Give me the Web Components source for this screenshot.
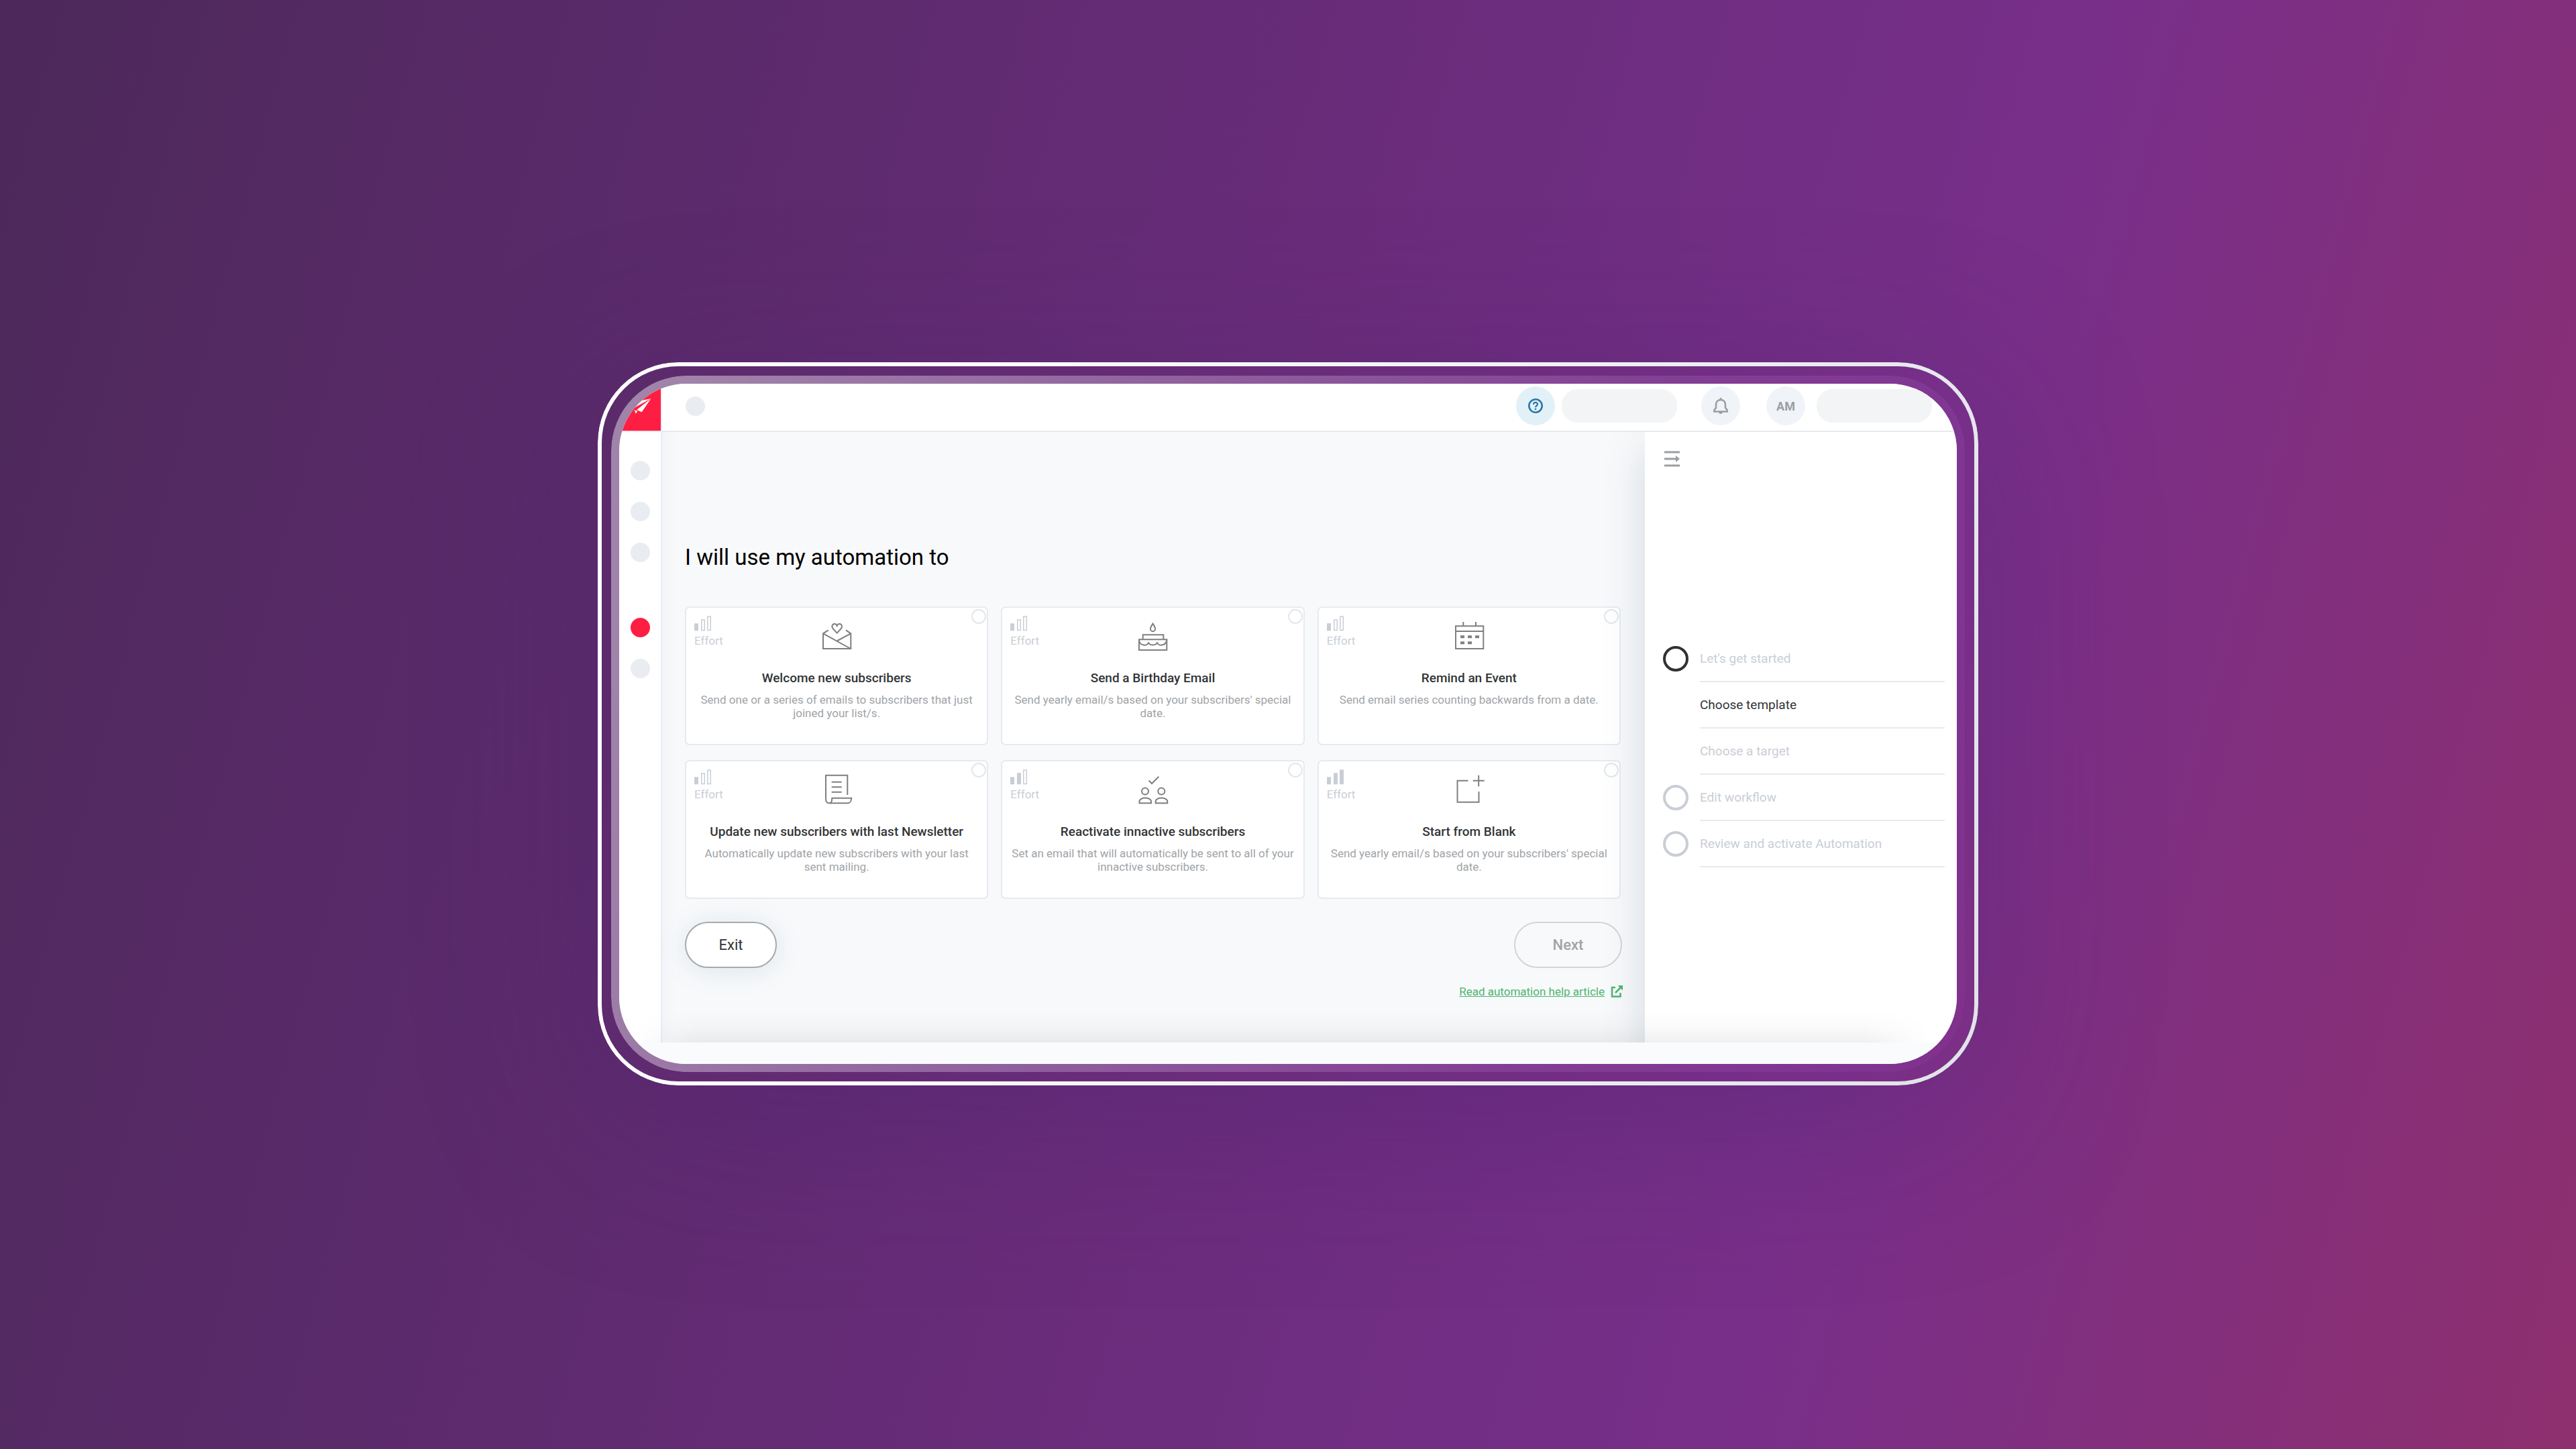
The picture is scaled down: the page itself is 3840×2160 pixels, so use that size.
<!DOCTYPE html>
<html lang="en">
<head>
<meta charset="utf-8">
<title>Automation setup</title>
<style>
    html {
        --line: #e6eaef;
        --muted: #c9ced6;
        --text: #313435;
        --text-secondary: #a0a4a8;
        --brand: #ff1e43;
        --blob: #e9ecf1;
    }
    body {
        margin: 0;
        font-family: Roboto, "Liberation Sans", sans-serif;
        color: var(--text);
        background: linear-gradient(105deg, #4c295a 0%, #622b73 36%, #782f8a 71%, #8e2f6e 100%);
    }
</style>
</head>
<body>
<device-stage>
    <app-shell>
        <app-rail slot="rail"></app-rail>
        <app-header slot="header"></app-header>
        <template-picker heading="I will use my automation to">
            <template-card icon="welcome" effort="1" heading="Welcome new subscribers">Send one or a series of emails to subscribers that just joined your list/s.</template-card>
            <template-card icon="birthday" effort="1" heading="Send a Birthday Email">Send yearly email/s based on your subscribers' special date.</template-card>
            <template-card icon="event" effort="1" heading="Remind an Event">Send email series counting backwards from a date.</template-card>
            <template-card icon="newsletter" effort="1" heading="Update new subscribers with last Newsletter">Automatically update new subscribers with your last sent mailing.</template-card>
            <template-card icon="people" effort="2" heading="Reactivate innactive subscribers">Set an email that will automatically be sent to all of your innactive subscribers.</template-card>
            <template-card icon="blank" effort="3" heading="Start from Blank">Send yearly email/s based on your subscribers' special date.</template-card>
        </template-picker>
        <step-panel slot="aside">
            <step-item marker="current">Let's get started</step-item>
            <step-item active>Choose template</step-item>
            <step-item>Choose a target</step-item>
            <step-item marker="todo">Edit workflow</step-item>
            <step-item marker="todo">Review and activate Automation</step-item>
        </step-panel>
    </app-shell>
</device-stage>

<script>
const ICONS = {
    welcome: `
        <path d="M11.7 15.3 4 20.3V43h41.3V20.3L38 15.3M4 20.3 45 43M45.3 20.3 24.5 31.5"/>
        <path d="M24.7 19.6 18.6 13C16 10 17.8 6 21 6c2 0 3 1.2 3.7 2.8C25.4 7.2 26.4 6 28.4 6c3.2 0 5 4 2.4 7z"/>`,
    birthday: `
        <path d="M24.5 5.6c2.2 3.4 3.6 5.6 3.6 8a3.6 3.6 0 0 1-7.2 0c0-2.400 1.4-4.6 3.6-8z"/>
        <path d="M9.7 29.3v-7h30.6v7M4 29.3h41.3V45H4z"/>
        <path d="M4 30c1 9.5 13 9.5 14 3.5 1.5 5.2 11.5 5.2 13 0 1 6 13 6 14.3-3.5"/>`,
    event: `
        <path d="M4 9.3h41.3V43H4zM4 17h41.3M15.3 3v7M34 3v7"/>
        <path d="M11 25.3h6M22 25.3h6M33 25.3h6M11 34.3h6M22 34.3h6" stroke-width="4"/>`,
    newsletter: `
        <path d="M40.3 32V2.7H8v34.6c0 5 2 7 5 7h27.5c4 0 5.3-2.3 5.8-7.6H17.3c0 5-1 7.6-4.3 7.6"/>
        <path d="M16.7 12.7h15M16.7 20.2h15M16.7 27.7h15"/>`,
    people: `
        <path d="M18.7 10.5 23 15 33.3 4.7"/>
        <circle cx="13" cy="26.5" r="5"/><circle cx="37.3" cy="26.5" r="5"/>
        <path d="M4.5 44.3v-2.5c0-7 17.5-7 17.5 0v2.5zM28.7 44.3v-2.5c0-7 17.5-7 17.5 0v2.5z"/>`,
    blank: `
        <path d="M22.5 10.7H6.5v32h32V27M29.7 10.7h17M38.2 2.7v16.5"/>`
};

/* Purple page with the double outline of the phone around its slot */
class DeviceStage extends HTMLElement {
    constructor() {
        super();
        this.attachShadow({ mode: 'open' });
    }

    connectedCallback() {
        this.shadowRoot.innerHTML = `
            <style>
                :host {
                    display: flex;
                    box-sizing: border-box;
                    align-items: center;
                    justify-content: center;
                    min-height: 100vh;
                    padding: 24px 24px 26px;
                }
                .outline, .bezel {
                    position: relative;
                    box-sizing: border-box;
                }
                .outline {
                    width: min(100%, 2058px);
                    padding: 20px;
                    border-radius: 120px;
                    box-shadow: 0 50px 280px rgba(72, 34, 110, 0.34);
                }
                .bezel {
                    padding: 12px;
                    border-radius: 112px;
                }
                /* gradient rings: everything inside the border is masked out */
                .outline::before, .bezel::before {
                    content: "";
                    position: absolute;
                    inset: 0;
                    border: 6px solid transparent;
                    border-radius: inherit;
                    background: linear-gradient(105deg, #fff 20%, #e0e3e8) border-box;
                    mask: linear-gradient(#000, #000) padding-box exclude, linear-gradient(#000, #000) border-box;
                }
                .bezel::before {
                    border-width: 12px;
                    background: linear-gradient(105deg, rgba(255, 255, 255, 0.42) 5%, rgba(224, 150, 240, 0.16) 70%, rgba(150, 60, 170, 0.16)) border-box;
                }
            </style>
            <div class="outline"><div class="bezel"><slot></slot></div></div>
        `;
    }
}

class AppShell extends HTMLElement {
    constructor() {
        super();
        this.attachShadow({ mode: 'open' });
    }

    connectedCallback() {
        this.shadowRoot.innerHTML = `
            <style>
                :host {
                    position: relative;
                    display: grid;
                    grid-template-columns: 64px 1fr 465px;
                    grid-template-rows: 72px auto 32px;
                    overflow: hidden;
                    border-radius: 100px;
                    background: #fff;
                }
                .rail { grid-area: 1 / 1 / 3 / 2; z-index: 1; }
                .header { grid-area: 1 / 2 / 2 / 4; z-index: 2; }
                .main { grid-area: 2 / 2; }
                .aside { grid-area: 2 / 3; }
                .rail, .header, .main, .aside { display: grid; }
                .dock {
                    grid-area: 3 / 1 / 4 / 4;
                    position: relative;
                    z-index: 3;
                    background: #fafbfd;
                }
                .dock::before {
                    content: "";
                    position: absolute;
                    inset: -45px 40px 100% 20px;
                    background: linear-gradient(transparent, rgba(0, 0, 0, 0.02) 50%, rgba(0, 0, 0, 0.06));
                    mask: linear-gradient(90deg, transparent, #000 100px, #000 calc(100% - 100px), transparent);
                }
            </style>
            <div class="rail"><slot name="rail"></slot></div>
            <div class="header"><slot name="header"></slot></div>
            <div class="main"><slot></slot></div>
            <div class="aside"><slot name="aside"></slot></div>
            <div class="dock"></div>
        `;
    }
}

class AppRail extends HTMLElement {
    constructor() {
        super();
        this.attachShadow({ mode: 'open' });
    }

    connectedCallback() {
        this.shadowRoot.innerHTML = `
            <style>
                :host {
                    display: flex;
                    flex-direction: column;
                    background: #fff;
                    border-right: 2px solid #e9eef4;
                    box-shadow: 0 0 20px rgba(60, 100, 140, 0.07);
                }
                .logo {
                    display: block;
                    height: 70px;
                    background: var(--brand);
                    border-bottom: 2px solid #f3e3e9;
                }
                nav {
                    display: flex;
                    flex-direction: column;
                    align-items: center;
                    gap: 32px;
                    padding-top: 43px;
                }
                button {
                    width: 29px;
                    height: 29px;
                    padding: 0;
                    border: 0;
                    border-radius: 50%;
                    background: var(--blob);
                    cursor: pointer;
                }
                .active {
                    margin-top: 51px;
                    background: var(--brand);
                }
            </style>
            <a class="logo" href="#" aria-label="Home">
                <svg width="62" height="70" fill="#fff" aria-hidden="true">
                    <path d="M47.3 22.3 33 25 18 35l7-1zM47.3 22.3 26 39l7.7 3.3zM22.7 39l4.6 2-2.6 3.7z"/>
                    <path d="M47.3 22.3 25 34l-4 3z" opacity=".7"/>
                </svg>
            </a>
            <nav>
                <button aria-label="Dashboard"></button>
                <button aria-label="Contacts"></button>
                <button aria-label="Campaigns"></button>
                <button class="active" aria-label="Automations"></button>
                <button aria-label="Settings"></button>
            </nav>
        `;
    }
}

class AppHeader extends HTMLElement {
    constructor() {
        super();
        this.attachShadow({ mode: 'open' });
    }

    connectedCallback() {
        this.shadowRoot.innerHTML = `
            <style>
                :host {
                    display: flex;
                    align-items: center;
                    padding: 0 37px 4px 35px;
                    background: #fff;
                    border-bottom: 2px solid var(--line);
                }
                button {
                    display: flex;
                    align-items: center;
                    justify-content: center;
                    width: 58px;
                    height: 58px;
                    padding: 0;
                    border: 0;
                    border-radius: 50%;
                    background: #f0f4f8;
                    color: #9b9fa2;
                    font: 700 18px Roboto, sans-serif;
                    cursor: pointer;
                }
                .back {
                    width: 29px;
                    height: 29px;
                    margin-right: auto;
                    background: var(--blob);
                }
                .help { background: #e2f1f8; color: #2878a8; }
                .pill {
                    width: 172px;
                    height: 50px;
                    border-radius: 24px;
                    background: #f3f4f6;
                }
                .help + .pill { margin: 0 36px 0 10px; }
                .user { margin: 0 17px 0 39px; }
                svg { fill: none; stroke: currentColor; }
            </style>
            <button class="back" aria-label="Back"></button>
            <button class="help" aria-label="Help">
                <svg width="24" height="24" stroke-width="2.6">
                    <circle cx="12" cy="12" r="9.7"/>
                    <path d="M9 10c0-4 6-4 6-.5 0 2.3-3 2.4-3 4.8" stroke-width="2.2"/>
                    <path d="M12 15.8V18" stroke-width="2.4"/>
                </svg>
            </button>
            <span class="pill"></span>
            <button aria-label="Notifications">
                <svg width="26" height="26" stroke-width="2.6">
                    <path d="M2 21.5h22M3.500 21v-2l2.500-3v-4.500C6 6.500 9 4 13 4s7 2.500 7 7.500V16l2.500 3v2"/>
                    <path d="M13 1v3"/>
                    <path d="M10 22h6c0 4-6 4-6 0z" fill="currentColor" stroke="none"/>
                </svg>
            </button>
            <button class="user">AM</button>
            <span class="pill"></span>
        `;
    }
}

class TemplatePicker extends HTMLElement {
    constructor() {
        super();
        this.attachShadow({ mode: 'open' });
    }

    connectedCallback() {
        this.shadowRoot.innerHTML = `
            <style>
                :host {
                    display: block;
                    padding: 167px 36px 64px 34px;
                    background: #f8f9fb;
                }
                h1 {
                    margin: 0 0 53px;
                    font-size: 33px;
                    line-height: 40px;
                    font-weight: 400;
                    color: #000;
                }
                .cards {
                    display: grid;
                    grid-template-columns: repeat(3, 1fr);
                    gap: 22px 19px;
                }
                .actions {
                    display: flex;
                    justify-content: space-between;
                    margin: 34px -2px 0 0;
                }
                button {
                    height: 69px;
                    padding: 0;
                    border: 2px solid #a6aaad;
                    border-radius: 35px;
                    background: #fff;
                    color: var(--text);
                    font: 400 22px Roboto, sans-serif;
                    cursor: pointer;
                }
                .exit {
                    width: 137px;
                    box-shadow: 0 4px 40px rgba(60, 110, 140, 0.14);
                }
                .next {
                    width: 161px;
                    border-color: #d3d5d7;
                    background: transparent;
                    color: #a3a3a3;
                    font-weight: 500;
                }
                .more {
                    display: flex;
                    justify-content: flex-end;
                    margin: 23px -3px 0 0;
                    font-size: 17px;
                    line-height: 24px;
                }
                a {
                    display: flex;
                    align-items: center;
                    gap: 9px;
                    color: #4cb56f;
                }
                svg { fill: none; stroke: currentColor; stroke-width: 2.5; }
            </style>
            <h1></h1>
            <div class="cards"><slot></slot></div>
            <div class="actions">
                <button class="exit">Exit</button>
                <button class="next" disabled>Next</button>
            </div>
            <div class="more">
                <a href="#"><span>Read automation help article</span>
                    <svg width="18" height="18" aria-hidden="true">
                        <path d="M7 3H2v13.500h12.500V11M7 11l9-9"/>
                        <path d="M10.500 0H18v7.500z" fill="currentColor" stroke="none"/>
                    </svg>
                </a>
            </div>
        `;
        this.shadowRoot.querySelector('h1').textContent = this.getAttribute('heading');
    }
}

class TemplateCard extends HTMLElement {
    constructor() {
        super();
        this.attachShadow({ mode: 'open' });
    }

    bars() {
        const effort = Number(this.getAttribute('effort'));
        return [[0, 11], [10, 17], [19, 22]].map(([x, height], i) => {
            const fill = i < effort ? 'currentColor' : 'none';
            return `<rect x="${x + 0.75}" y="${23 - height}" width="4.5" height="${height - 1.5}" fill="${fill}"/>`;
        }).join('');
    }

    connectedCallback() {
        this.shadowRoot.innerHTML = `
            <style>
                :host { display: grid; }
                label {
                    display: block;
                    min-height: 203px;
                    border: 2px solid var(--line);
                    border-radius: 7px;
                    background: #fff;
                    text-align: center;
                    cursor: pointer;
                }
                .top {
                    display: grid;
                    grid-template-columns: 74px 1fr 74px;
                    align-items: start;
                    height: 88px;
                }
                .effort {
                    padding: 12px 0 0 12px;
                    color: var(--muted);
                    font-size: 17px;
                    line-height: 20px;
                    text-align: left;
                }
                .effort svg { display: block; margin-bottom: 4px; stroke-width: 1.5; }
                svg { fill: none; stroke: currentColor; }
                .icon {
                    justify-self: center;
                    margin-top: 18px;
                    color: #7f7f7f;
                    stroke-width: 2;
                }
                input {
                    appearance: none;
                    justify-self: end;
                    width: 22px;
                    height: 22px;
                    margin: 2px 1px;
                    border: 2px solid #e2e7ee;
                    border-radius: 50%;
                    background: #fff;
                }
                input:checked { border-color: var(--brand); }
                h2 {
                    margin: 0;
                    font-size: 19px;
                    line-height: 34px;
                    font-weight: 500;
                }
                p {
                    margin: 5px 10px;
                    font-size: 17px;
                    line-height: 20px;
                    color: var(--text-secondary);
                }
            </style>
            <label>
                <div class="top">
                    <div class="effort"><svg width="26" height="23">${this.bars()}</svg>Effort</div>
                    <svg class="icon" width="48" height="48">${ICONS[this.getAttribute('icon')]}</svg>
                    <input type="radio" name="template">
                </div>
                <h2></h2>
                <p><slot></slot></p>
            </label>
        `;
        this.shadowRoot.querySelector('h2').textContent = this.getAttribute('heading');
    }
}

class StepPanel extends HTMLElement {
    constructor() {
        super();
        this.attachShadow({ mode: 'open' });
    }

    connectedCallback() {
        this.shadowRoot.innerHTML = `
            <style>
                :host {
                    display: block;
                    padding: 28px 18px 0 27px;
                    background: #fff;
                    box-shadow: 0 24px 60px rgba(60, 90, 110, 0.2);
                }
                button {
                    display: block;
                    margin: 0 0 252px;
                    padding: 0;
                    border: 0;
                    background: none;
                    color: #9b9ea1;
                    cursor: pointer;
                }
                svg { display: block; fill: none; stroke: currentColor; stroke-width: 3; }
            </style>
            <button aria-label="Collapse panel">
                <svg width="26" height="24">
                    <path d="M2 2h23M2 12h18M2 22h23"/>
                    <path d="M19 7l6 5-6 5z" fill="currentColor" stroke="none"/>
                </svg>
            </button>
            <slot></slot>
        `;
    }
}

class StepItem extends HTMLElement {
    constructor() {
        super();
        this.attachShadow({ mode: 'open' });
    }

    connectedCallback() {
        this.shadowRoot.innerHTML = `
            <style>
                :host {
                    display: grid;
                    grid-template-columns: 38px 1fr;
                    gap: 17px;
                    align-items: center;
                    color: var(--muted);
                    font-size: 19px;
                }
                :host([active]) { color: var(--text); }
                .marker {
                    box-sizing: border-box;
                    height: 38px;
                    margin-bottom: 2px;
                    border-radius: 50%;
                }
                :host([marker]) .marker { border: 4px solid var(--muted); }
                :host([marker="current"]) .marker { border-color: #303233; }
                .label {
                    border-bottom: 2px solid var(--line);
                    line-height: 67px;
                }
            </style>
            <span class="marker"></span>
            <span class="label"><slot></slot></span>
        `;
    }
}

customElements.define('device-stage', DeviceStage);
customElements.define('app-shell', AppShell);
customElements.define('app-rail', AppRail);
customElements.define('app-header', AppHeader);
customElements.define('template-picker', TemplatePicker);
customElements.define('template-card', TemplateCard);
customElements.define('step-panel', StepPanel);
customElements.define('step-item', StepItem);
</script>
</body>
</html>
